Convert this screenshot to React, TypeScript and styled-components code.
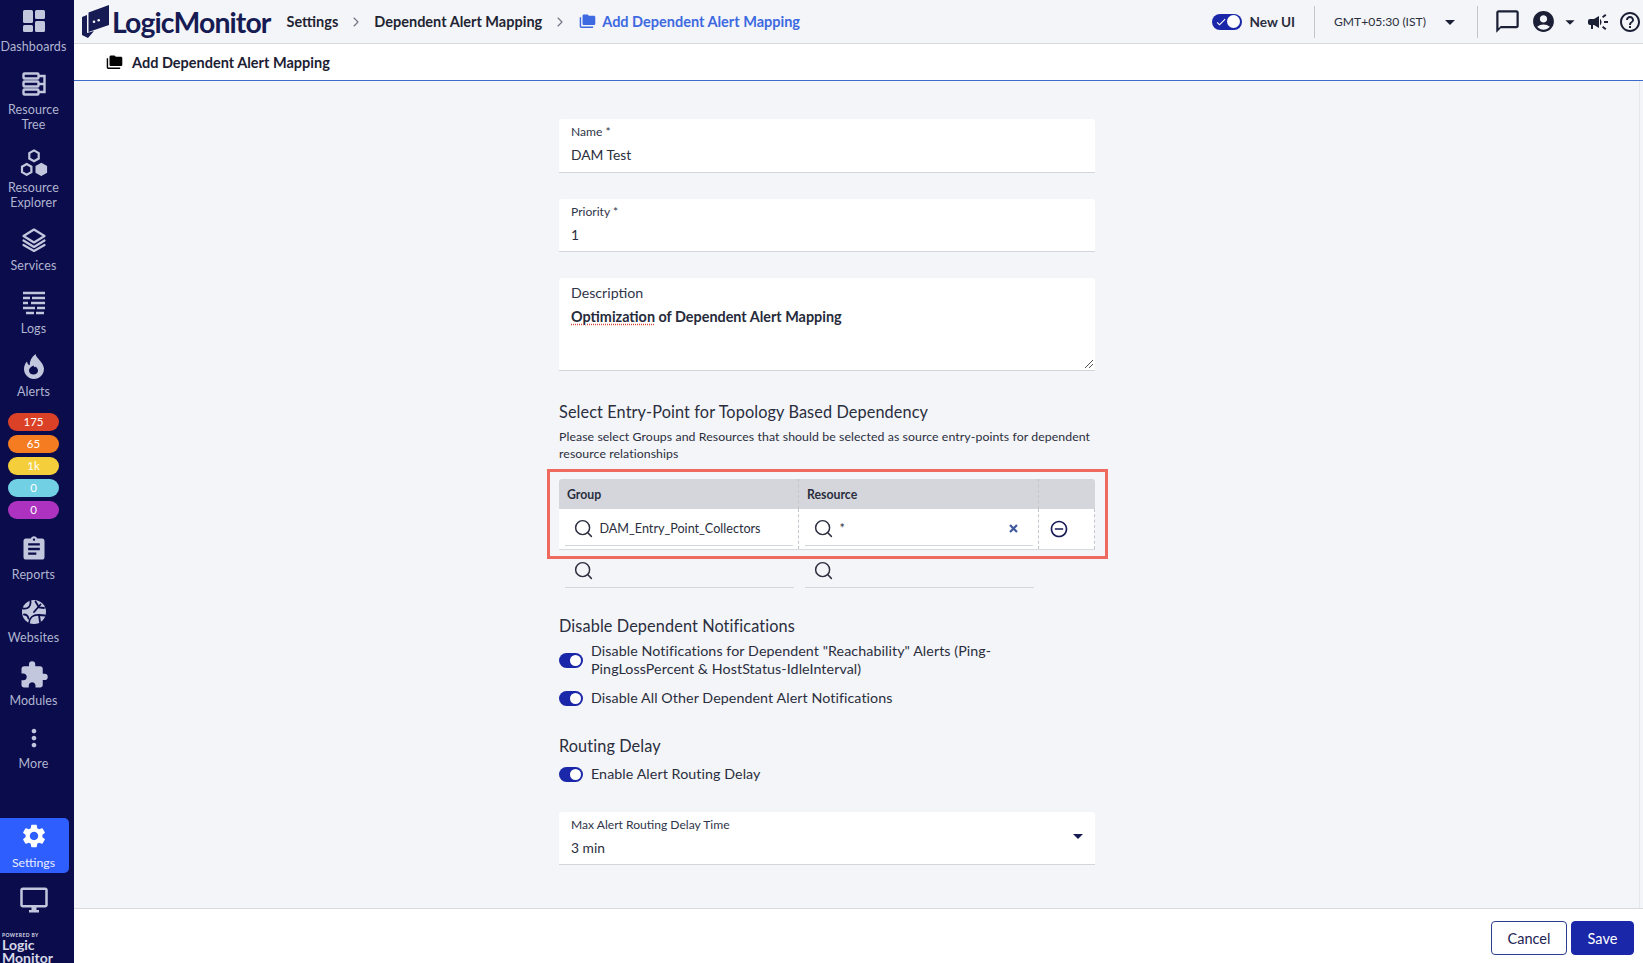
import React from "react";
import styled, { createGlobalStyle } from "styled-components";
import { Search, ChevronRight } from "lucide-react";
import {
  MdAccountCircle, MdArrowDropDown, MdAssignment, MdCampaign, MdChatBubbleOutline, MdCheck,
  MdExtension, MdFolderCopy, MdHelpOutline, MdMoreVert, MdOutlineDesktopWindows, MdOutlineRemoveCircleOutline,
  MdSettings,
} from "react-icons/md";

const FONT = `Lato, "Open Sans", "Liberation Sans", sans-serif`;

const Global = createGlobalStyle`
  html, body { margin: 0; padding: 0; height: 100%; background: #f4f5f8; }
  body { font-family: ${FONT}; color: #1d2233; overflow: hidden; }
  #root { height: 100%; }
  * { box-sizing: border-box; }
`;

const Page = styled.div`display: flex; width: 100%; height: 963px; overflow: hidden;`;

const Sidebar = styled.nav`
  width: 74px; flex: none; height: 963px; overflow: hidden; background: #0a0c4b;
  display: flex; flex-direction: column; padding-top: 9px; color: #c3c7de;
`;
const NavItem = styled.div<{ $tail?: number }>`
  flex: none; display: flex; flex-direction: column; align-items: center; gap: 6px;
  padding: 0 7px ${(p) => p.$tail ?? 18}px 0;
`;
const NavIcon = styled.span`
  display: flex; align-items: center; justify-content: center; width: 24px; height: 24px;
  svg { display: block; flex: none; }
`;
const NavLabel = styled.span`
  font-size: 12.5px; line-height: 15px; text-align: center; color: #b0b4d0; white-space: pre-line; letter-spacing: 0.1px;
`;
const Badges = styled.div`flex: none; display: flex; flex-direction: column; gap: 4px; padding: 0 15px 18px 8px;`;
const Badge = styled.div<{ $bg: string }>`
  height: 18px; border-radius: 9px; background: ${(p) => p.$bg}; color: #fff;
  font-size: 11.5px; line-height: 18px; text-align: center;
`;
const SettingsTile = styled.div`
  flex: none; width: 69px; height: 55px; margin-top: 29px; background: #2f5eff; border-radius: 0 5px 5px 0;
  display: flex; flex-direction: column; align-items: center; gap: 5px; padding: 4px 2px 0 0; color: #fff;
`;
const TileLabel = styled.span`font-size: 12.3px; line-height: 15px; color: #e9edff;`;
const Monitor = styled.div`flex: none; display: flex; justify-content: center; padding: 12px 7px 17px 0;`;
const Powered = styled.div`flex: none; padding-left: 2px; color: #d7d9e8;`;
const PoweredTiny = styled.div`font-size: 5px; line-height: 6px; letter-spacing: 0.4px; font-weight: 700;`;
const PoweredWord = styled.div`font-size: 14px; line-height: 13px; font-weight: 700;`;

const Main = styled.div`flex: 1; min-width: 0; display: flex; flex-direction: column; height: 963px;`;

const Header = styled.header`
  flex: none; height: 44px; border-bottom: 1px solid #d8d9dd; background: #f4f5f8;
  display: flex; align-items: center; padding: 0 0 0 8px;
`;
const LogoWord = styled.span`
  font-size: 28.4px; font-weight: 700; color: #171b54; letter-spacing: -0.9px; line-height: 44px; margin-left: 3px;
`;
const Crumbs = styled.div`display: flex; align-items: center; margin-left: 16px; font-size: 14.5px; font-weight: 700; color: #1f2433;`;
const CrumbSep = styled.span`display: flex; color: #6e7280; margin: 0 10px;`;
const CrumbActive = styled.span`display: flex; align-items: center; gap: 6px; color: #3d69e1; margin-left: 1px;`;
const HeaderRight = styled.div`margin-left: auto; display: flex; align-items: center; height: 100%; color: #1c2036;`;
const TopToggle = styled.span`
  width: 30px; height: 16px; border-radius: 8px; background: #1a27a8; display: block; position: relative; color: #fff;
  svg { position: absolute; left: 3px; top: 2px; }
  &::after { content: ""; position: absolute; right: 1.5px; top: 1.5px; width: 13px; height: 13px; border-radius: 50%; background: #fff; }
`;
const NewUi = styled.span`font-size: 13.6px; font-weight: 700; margin-left: 8px; color: #2a2e3e;`;
const VRule = styled.span<{ $ml: number }>`width: 1px; height: 32px; background: #c4c5cb; display: block; margin-left: ${(p) => p.$ml}px;`;
const TimeZone = styled.span`font-size: 12.1px; color: #2a2e3e; width: 123px; padding-left: 19px; white-space: nowrap;`;
const HeadIcon = styled.span<{ $ml?: number; $mr?: number }>`
  display: flex; margin-left: ${(p) => p.$ml ?? 0}px; margin-right: ${(p) => p.$mr ?? 0}px;
`;

const SubBar = styled.div`
  flex: none; height: 37px; background: #fff; border-bottom: 1px solid #3d69c8;
  display: flex; align-items: center; gap: 9px; padding-left: 32px; font-size: 14.5px; font-weight: 700; color: #1c2033;
  svg { color: #000; }
`;

const Body = styled.main`
  flex: 1; min-height: 0; display: flex; overflow: hidden; border-right: 1px solid #e6e7ea; margin-right: 3px; padding-left: 485px;
`;
const Form = styled.div`width: 536px; padding-top: 38px; display: flex; flex-direction: column;`;

const Card = styled.div<{ $h: number; $mb?: number; $mt?: number }>`
  position: relative; flex: none; height: ${(p) => p.$h}px; margin: ${(p) => p.$mt ?? 0}px 0 ${(p) => p.$mb ?? 0}px; background: #fff;
  border-bottom: 1px solid #d3d5dc; border-radius: 3px 3px 0 0; padding: 5px 12px 0;
`;
const SmallLabel = styled.div`font-size: 12.1px; line-height: 16px; color: #30354a;`;
const FieldValue = styled.div`font-size: 13.8px; line-height: 20px; margin-top: 5px; color: #2a2e3e;`;
const DescLabel = styled.div`font-size: 14.2px; line-height: 18px; margin-top: 1px; color: #30354a;`;
const DescValue = styled.div`font-size: 14.4px; line-height: 20px; margin-top: 5px; font-weight: 700; color: #262a3a;`;
const Spell = styled.span`text-decoration: underline dotted #d8433a; text-underline-offset: 2px;`;
const Grip = styled.svg`position: absolute; right: 1px; bottom: 1px;`;
const CardArrow = styled.span`position: absolute; right: 5px; top: 12px; color: #171b54; display: flex;`;

const Heading = styled.h3<{ $mt: number }>`
  margin: ${(p) => p.$mt}px 0 0; font-size: 16.3px; line-height: 20px; font-weight: 400; color: #2a2e3e; letter-spacing: 0.1px;
`;
const Help = styled.p`margin: 6px 0 0; font-size: 12.3px; line-height: 17px; color: #2a2e3e; letter-spacing: 0.08px;`;

const TableHighlight = styled.div`
  position: relative; flex: none; margin-top: 7.5px; height: 0;
  &::before { content: ""; position: absolute; left: -12.5px; right: -13px; top: -1px; height: 84px; border: 3px solid #ef6a5e; }
`;
const Table = styled.div`flex: none; margin-top: 9.5px;`;
const Row = styled.div<{ $head?: boolean; $plain?: boolean }>`
  display: grid; grid-template-columns: 240px 240px 56px;
  height: ${(p) => (p.$head ? 30 : 41)}px;
  background: ${(p) => (p.$head ? "#d5d6dc" : p.$plain ? "transparent" : "#fff")};
  border-radius: ${(p) => (p.$head ? "3px 3px 0 0" : "0")};
  border-bottom: ${(p) => (p.$head || p.$plain ? "0" : "1px solid #d8d9dd")};
`;
const Cell = styled.div<{ $line?: boolean; $pad?: number }>`
  display: flex; align-items: center; padding: 0 ${(p) => p.$pad ?? 0}px;
  border-right: ${(p) => (p.$line ? "1px dashed #c3c5cc" : "0")};
  font-size: 12.3px; font-weight: 700; color: #2a2e3e;
`;
const SearchField = styled.div`
  position: relative; flex: 1; height: 34px; margin: 3px 5px 0 6px; align-self: flex-start;
  border-bottom: 1px solid #d3d5dc; display: flex; align-items: center; padding-left: 7.5px; gap: 6px;
  font-size: 12.6px; font-weight: 400; color: #2a2e3e;
  svg { flex: none; }
`;
const PlainSearch = styled(SearchField)`margin-top: 3.5px;`;
const Clear = styled.span`position: absolute; right: 15px; top: 12px; color: #3e5a9d; display: flex;`;
const Remove = styled.span`display: flex; color: #171b54; margin-left: 10px;`;

const Toggle = styled.span`
  flex: none; display: block; position: relative; width: 24px; height: 15px; border-radius: 8px; background: #1a27a8;
  &::after { content: ""; position: absolute; right: 2px; top: 2px; width: 11px; height: 11px; border-radius: 50%; background: #fff; }
`;
const ToggleRow = styled.div<{ $mt: number }>`
  display: flex; align-items: center; gap: 8px; margin-top: ${(p) => p.$mt}px; font-size: 14.25px; line-height: 18px; color: #2a2e3e; letter-spacing: 0.08px;
`;

const Footer = styled.footer`
  flex: none; height: 55px; background: #fff; border-top: 1px solid #d8d9dd;
  display: flex; justify-content: flex-end; align-items: flex-start; gap: 4px; padding: 12px 9px 0 0;
`;
const Button = styled.button<{ $primary?: boolean }>`
  height: 34px; width: ${(p) => (p.$primary ? 63 : 76)}px; border-radius: 4px; font-family: ${FONT}; font-size: 14.5px;
  border: 1px solid ${(p) => (p.$primary ? "#1a27a8" : "#2c3e8c")};
  background: ${(p) => (p.$primary ? "#1a27a8" : "#fff")}; color: ${(p) => (p.$primary ? "#fff" : "#1d2355")};
`;

const Dash = () => (
  <svg width="22" height="22" viewBox="0 0 22 22" fill="currentColor">
    <rect x="0" y="0" width="10" height="13" rx="1.5" /><rect x="12" y="0" width="10" height="9" rx="1.5" />
    <rect x="0" y="15" width="10" height="7" rx="1.5" /><rect x="12" y="11" width="10" height="11" rx="1.5" />
  </svg>
);
const Tree = () => (
  <svg width="24" height="24" viewBox="0 0 24 24" fill="none" stroke="currentColor" strokeWidth="2.4">
    <rect x="1.5" y="1.5" width="15" height="5" rx="1" /><rect x="1.5" y="9.5" width="15" height="5" rx="1" />
    <rect x="1.5" y="17.5" width="15" height="5" rx="1" />
    <path d="M16.5 4h6v16h-6M16.5 12h6" />
  </svg>
);
const Hexes = () => (
  <svg width="28" height="27" viewBox="0 0 28 27" fill="none" stroke="currentColor" strokeWidth="2.2">
    <path d="M14 1.4l4.7 2.7v5.4L14 12.2 9.3 9.5V4.1z" />
    <path d="M6.7 15l4.7 2.7v5.4l-4.7 2.7L2 23.1v-5.4z" />
    <path d="M21.3 15l4.7 2.7v5.4l-4.7 2.7-4.7-2.7v-5.4z" fill="currentColor" />
  </svg>
);
const Layers = () => (
  <svg width="24" height="24" viewBox="0 0 24 24" fill="none" stroke="currentColor" strokeWidth="2.2" strokeLinejoin="round" strokeLinecap="round">
    <path d="M12 1.5L22.5 8 12 14.5 1.5 8z" /><path d="M1.5 12.5L12 19l10.5-6.5" /><path d="M1.5 17L12 23l10.5-6" />
  </svg>
);
const LogLines = () => (
  <svg width="24" height="24" viewBox="0 0 24 24" stroke="currentColor" strokeWidth="2.4">
    <path d="M1 2h22M1 7h7M10 7h13M1 12h5M9 12h14M1 17h12M15 17h8M4 22h8M14 22h8" />
  </svg>
);
const Flame = () => (
  <svg width="20" height="25" viewBox="0 0 20 25" fill="currentColor" fillRule="evenodd">
    <path d="M11.5 0c.5 4 7.5 7.500 8.500 14.500C20 20.500 15.500 25 10 25S0 20.500 0 15c0-3 1-5.500 3-7.500.3 2 1.200 3.200 2.700 3.800C5.500 7 7.500 3 11.500 0zM9.500 11.500c-2.800 1-4.500 3-4.500 5 0 2.500 2 4 4.500 4s4.500-1.500 4.500-4c0-2-1.500-2.500-2-4-.8 1-1.800 1-2.500-1z" />
  </svg>
);
const Globe = () => (
  <svg width="24" height="24" viewBox="0 0 24 24">
    <circle cx="12" cy="12" r="12" fill="currentColor" />
    <g fill="none" stroke="#0a0c4b" strokeWidth="1.8" strokeLinecap="round">
      <path d="M1 8.500C6 9.500 9 6.500 8.500 1" /><path d="M7 23c.5-5 4-8.500 10-8l6 .5" />
      <path d="M12 12L18.500 4.500" /><path d="M13.500 1.500L17 7.500l5 .5" /><path d="M2 14.500c2 0 4 1.500 4.500 4" /><path d="M17 15l1 7" />
    </g>
  </svg>
);
const LogoMark = () => (
  <svg width="27" height="33" viewBox="0 0 27 33" fill="#171b54">
    <path d="M6.500 7.500L27 0v20L6.500 27z" />
    <path d="M0 12l5-2v18l7-2-6 7-6-3z" />
    <circle cx="12" cy="16.700" r="1.300" fill="#f4f5f8" /><circle cx="16.700" cy="15.200" r="1.300" fill="#f4f5f8" />
  </svg>
);
const ClearMark = () => (
  <svg width="9" height="9" viewBox="0 0 9 9" fill="none" stroke="currentColor" strokeWidth="2.2"><path d="M1 1l7 7M8 1L1 8" /></svg>
);

export default function App() {
  return (
    <Page>
      <Global />
      <Sidebar>
        <NavItem><NavIcon><Dash /></NavIcon><NavLabel>Dashboards</NavLabel></NavItem>
        <NavItem><NavIcon><Tree /></NavIcon><NavLabel>{"Resource\nTree"}</NavLabel></NavItem>
        <NavItem><NavIcon><Hexes /></NavIcon><NavLabel>{"Resource\nExplorer"}</NavLabel></NavItem>
        <NavItem><NavIcon><Layers /></NavIcon><NavLabel>Services</NavLabel></NavItem>
        <NavItem><NavIcon><LogLines /></NavIcon><NavLabel>Logs</NavLabel></NavItem>
        <NavItem $tail={14}><NavIcon><Flame /></NavIcon><NavLabel>Alerts</NavLabel></NavItem>
        <Badges>
          <Badge $bg="#db4127">175</Badge>
          <Badge $bg="#f57c20">65</Badge>
          <Badge $bg="#f5cf3b">1k</Badge>
          <Badge $bg="#71d0e3">0</Badge>
          <Badge $bg="#ad32c0">0</Badge>
        </Badges>
        <NavItem><NavIcon><MdAssignment size={28} /></NavIcon><NavLabel>Reports</NavLabel></NavItem>
        <NavItem><NavIcon><Globe /></NavIcon><NavLabel>Websites</NavLabel></NavItem>
        <NavItem><NavIcon><MdExtension size={30} /></NavIcon><NavLabel>Modules</NavLabel></NavItem>
        <NavItem><NavIcon><MdMoreVert size={28} /></NavIcon><NavLabel>More</NavLabel></NavItem>
        <SettingsTile><MdSettings size={28} /><TileLabel>Settings</TileLabel></SettingsTile>
        <Monitor><MdOutlineDesktopWindows size={30} /></Monitor>
        <Powered>
          <PoweredTiny>POWERED BY</PoweredTiny>
          <PoweredWord>Logic</PoweredWord>
          <PoweredWord>Monitor</PoweredWord>
        </Powered>
      </Sidebar>
      <Main>
        <Header>
          <LogoMark />
          <LogoWord>LogicMonitor</LogoWord>
          <Crumbs>
            <span>Settings</span>
            <CrumbSep><ChevronRight size={16} strokeWidth={1.6} /></CrumbSep>
            <span>Dependent Alert Mapping</span>
            <CrumbSep><ChevronRight size={16} strokeWidth={1.6} /></CrumbSep>
            <CrumbActive><MdFolderCopy size={17} />Add Dependent Alert Mapping</CrumbActive>
          </Crumbs>
          <HeaderRight>
            <TopToggle><MdCheck size={12} /></TopToggle>
            <NewUi>New UI</NewUi>
            <VRule $ml={19} />
            <TimeZone>GMT+05:30 (IST)</TimeZone>
            <MdArrowDropDown size={24} />
            <VRule $ml={15} />
            <HeadIcon $ml={16}><MdChatBubbleOutline size={27} /></HeadIcon>
            <HeadIcon $ml={10}><MdAccountCircle size={25} /></HeadIcon>
            <HeadIcon $ml={3}><MdArrowDropDown size={22} /></HeadIcon>
            <HeadIcon $ml={5}><MdCampaign size={24} /></HeadIcon>
            <HeadIcon $ml={8} $mr={1}><MdHelpOutline size={24} /></HeadIcon>
          </HeaderRight>
        </Header>
        <SubBar><MdFolderCopy size={17} />Add Dependent Alert Mapping</SubBar>
        <Body>
          <Form>
            <Card $h={54} $mb={26}><SmallLabel>Name *</SmallLabel><FieldValue>DAM Test</FieldValue></Card>
            <Card $h={53} $mb={26}><SmallLabel>Priority *</SmallLabel><FieldValue>1</FieldValue></Card>
            <Card $h={93}>
              <DescLabel>Description</DescLabel>
              <DescValue><Spell>Optimization</Spell> of Dependent Alert Mapping</DescValue>
              <Grip width="10" height="10" viewBox="0 0 10 10" stroke="#555"><path d="M1 9l8-8M5 9l4-4" /></Grip>
            </Card>
            <Heading $mt={31}>Select Entry-Point for Topology Based Dependency</Heading>
            <Help>Please select Groups and Resources that should be selected as source entry-points for dependent resource relationships</Help>
            <TableHighlight />
            <Table>
              <Row $head>
                <Cell $line $pad={8}>Group</Cell>
                <Cell $line $pad={8}>Resource</Cell>
                <Cell />
              </Row>
              <Row>
                <Cell $line><SearchField><Search size={21} strokeWidth={1.7} />DAM_Entry_Point_Collectors</SearchField></Cell>
                <Cell $line><SearchField><Search size={21} strokeWidth={1.7} />*<Clear><ClearMark /></Clear></SearchField></Cell>
                <Cell $line><Remove><MdOutlineRemoveCircleOutline size={20} /></Remove></Cell>
              </Row>
              <Row $plain>
                <Cell><PlainSearch><Search size={21} strokeWidth={1.7} /></PlainSearch></Cell>
                <Cell><PlainSearch><Search size={21} strokeWidth={1.7} /></PlainSearch></Cell>
                <Cell />
              </Row>
            </Table>
            <Heading $mt={25}>Disable Dependent Notifications</Heading>
            <ToggleRow $mt={6}><Toggle /><span>Disable Notifications for Dependent "Reachability" Alerts (Ping-<br />PingLossPercent &amp; HostStatus-IdleInterval)</span></ToggleRow>
            <ToggleRow $mt={11}><Toggle /><span>Disable All Other Dependent Alert Notifications</span></ToggleRow>
            <Heading $mt={29}>Routing Delay</Heading>
            <ToggleRow $mt={9}><Toggle /><span>Enable Alert Routing Delay</span></ToggleRow>
            <Card $h={53} $mt={29}>
              <SmallLabel>Max Alert Routing Delay Time</SmallLabel><FieldValue>3 min</FieldValue>
              <CardArrow><MdArrowDropDown size={24} /></CardArrow>
            </Card>
          </Form>
        </Body>
        <Footer><Button>Cancel</Button><Button $primary>Save</Button></Footer>
      </Main>
    </Page>
  );
}
